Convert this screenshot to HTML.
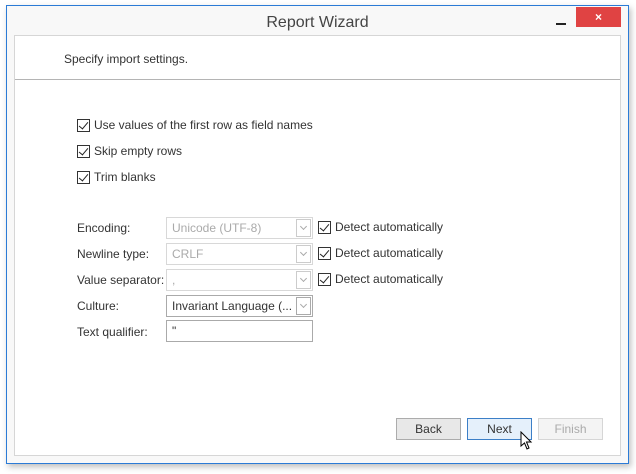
<!DOCTYPE html>
<html><head><style>
*{box-sizing:border-box;margin:0;padding:0}
body{width:636px;height:474px;background:#fff;font-family:"Liberation Sans",sans-serif;font-size:12px;color:#333;position:relative;overflow:hidden}
.win{position:absolute;left:6px;top:5px;width:623px;height:459px;border:1px solid #2b7bd6;background:#f8f8f8;box-shadow:2px 3px 6px rgba(0,0,0,.25)}
.title{position:absolute;left:0;right:0;top:8px;text-align:center;font-size:16px;color:#444}
.min{position:absolute;left:549px;top:17px;width:10px;height:2px;background:#222}
.close{position:absolute;left:569px;top:1px;width:45px;height:20px;background:#e04343;color:#fff;text-align:center;font-weight:bold;font-size:12px;line-height:20px}
.inner{position:absolute;left:8px;top:30px;width:607px;height:421px;border:1px solid #d6d6d6;background:#fff}
.sep{position:absolute;left:0;right:0;top:43px;height:1px;background:#b4b4b4}
.t{position:absolute;white-space:nowrap}
.cb{position:absolute;width:13px;height:13px;border:1px solid #333;background:#fff}
.cb::after{content:"";position:absolute;left:3px;top:0px;width:4px;height:8px;border:solid #222;border-width:0 1.5px 1.5px 0;transform:rotate(40deg)}
.box{position:absolute;height:22px;border:1px solid #d8d8d8;background:#fff;padding-left:5px;line-height:20px;color:#aaa}
.dd{position:absolute;right:1px;top:1px;width:15px;height:18px;border:1px solid #ccc;background:#fff}
.dd::after{content:"";position:absolute;left:4px;top:4px;width:4px;height:4px;border:solid #aaa;border-width:0 1px 1px 0;transform:rotate(45deg)}
.btn{position:absolute;top:418px;width:65px;height:22px;border:1px solid #acacac;background:#e8e8e8;text-align:center;line-height:20px;color:#333}
</style></head><body>
<div class="win">
<div class="title">Report Wizard</div>
<div class="min"></div><div class="close">×</div>
</div>
<div class="inner" style="left:14px;top:35px;width:607px;height:421px"><div class="sep"></div></div>
<div class="t" style="left:64px;top:52px">Specify import settings.</div>

<div class="cb" style="left:77px;top:119px"></div><div class="t" style="left:94px;top:118px">Use values of the first row as field names</div>
<div class="cb" style="left:77px;top:145px"></div><div class="t" style="left:94px;top:144px">Skip empty rows</div>
<div class="cb" style="left:77px;top:171px"></div><div class="t" style="left:94px;top:170px">Trim blanks</div>

<div class="t" style="left:77px;top:221px">Encoding:</div>
<div class="box" style="left:166px;top:217px;width:147px">Unicode (UTF-8)<div class="dd"></div></div>
<div class="cb" style="left:318px;top:221px"></div><div class="t" style="left:335px;top:220px">Detect automatically</div>

<div class="t" style="left:77px;top:247px">Newline type:</div>
<div class="box" style="left:166px;top:243px;width:147px">CRLF<div class="dd"></div></div>
<div class="cb" style="left:318px;top:247px"></div><div class="t" style="left:335px;top:246px">Detect automatically</div>

<div class="t" style="left:77px;top:273px">Value separator:</div>
<div class="box" style="left:166px;top:269px;width:147px">,<div class="dd"></div></div>
<div class="cb" style="left:318px;top:273px"></div><div class="t" style="left:335px;top:272px">Detect automatically</div>

<div class="t" style="left:77px;top:299px">Culture:</div>
<div class="box" style="left:166px;top:295px;width:147px;border-color:#aaa;color:#333">Invariant Language (...<div class="dd" style="border-color:#aaa"></div></div>

<div class="t" style="left:77px;top:325px">Text qualifier:</div>
<div class="box" style="left:166px;top:320px;width:147px;border-color:#aaa;color:#333">"</div>

<div class="btn" style="left:396px">Back</div>
<div class="btn" style="left:467px;border-color:#3c7fc7;background:#e5f0fb">Next</div>
<div class="btn" style="left:538px;border-color:#d6d6d6;background:#f4f4f4;color:#aaa">Finish</div>
<svg style="position:absolute;left:520px;top:431px" width="14" height="20" viewBox="0 0 14 20"><path d="M1 1 L1 15 L4.5 12 L7 18 L9 17 L6.5 11 L11 11 Z" fill="#fff" stroke="#000" stroke-width="1"/></svg>
</body></html>
